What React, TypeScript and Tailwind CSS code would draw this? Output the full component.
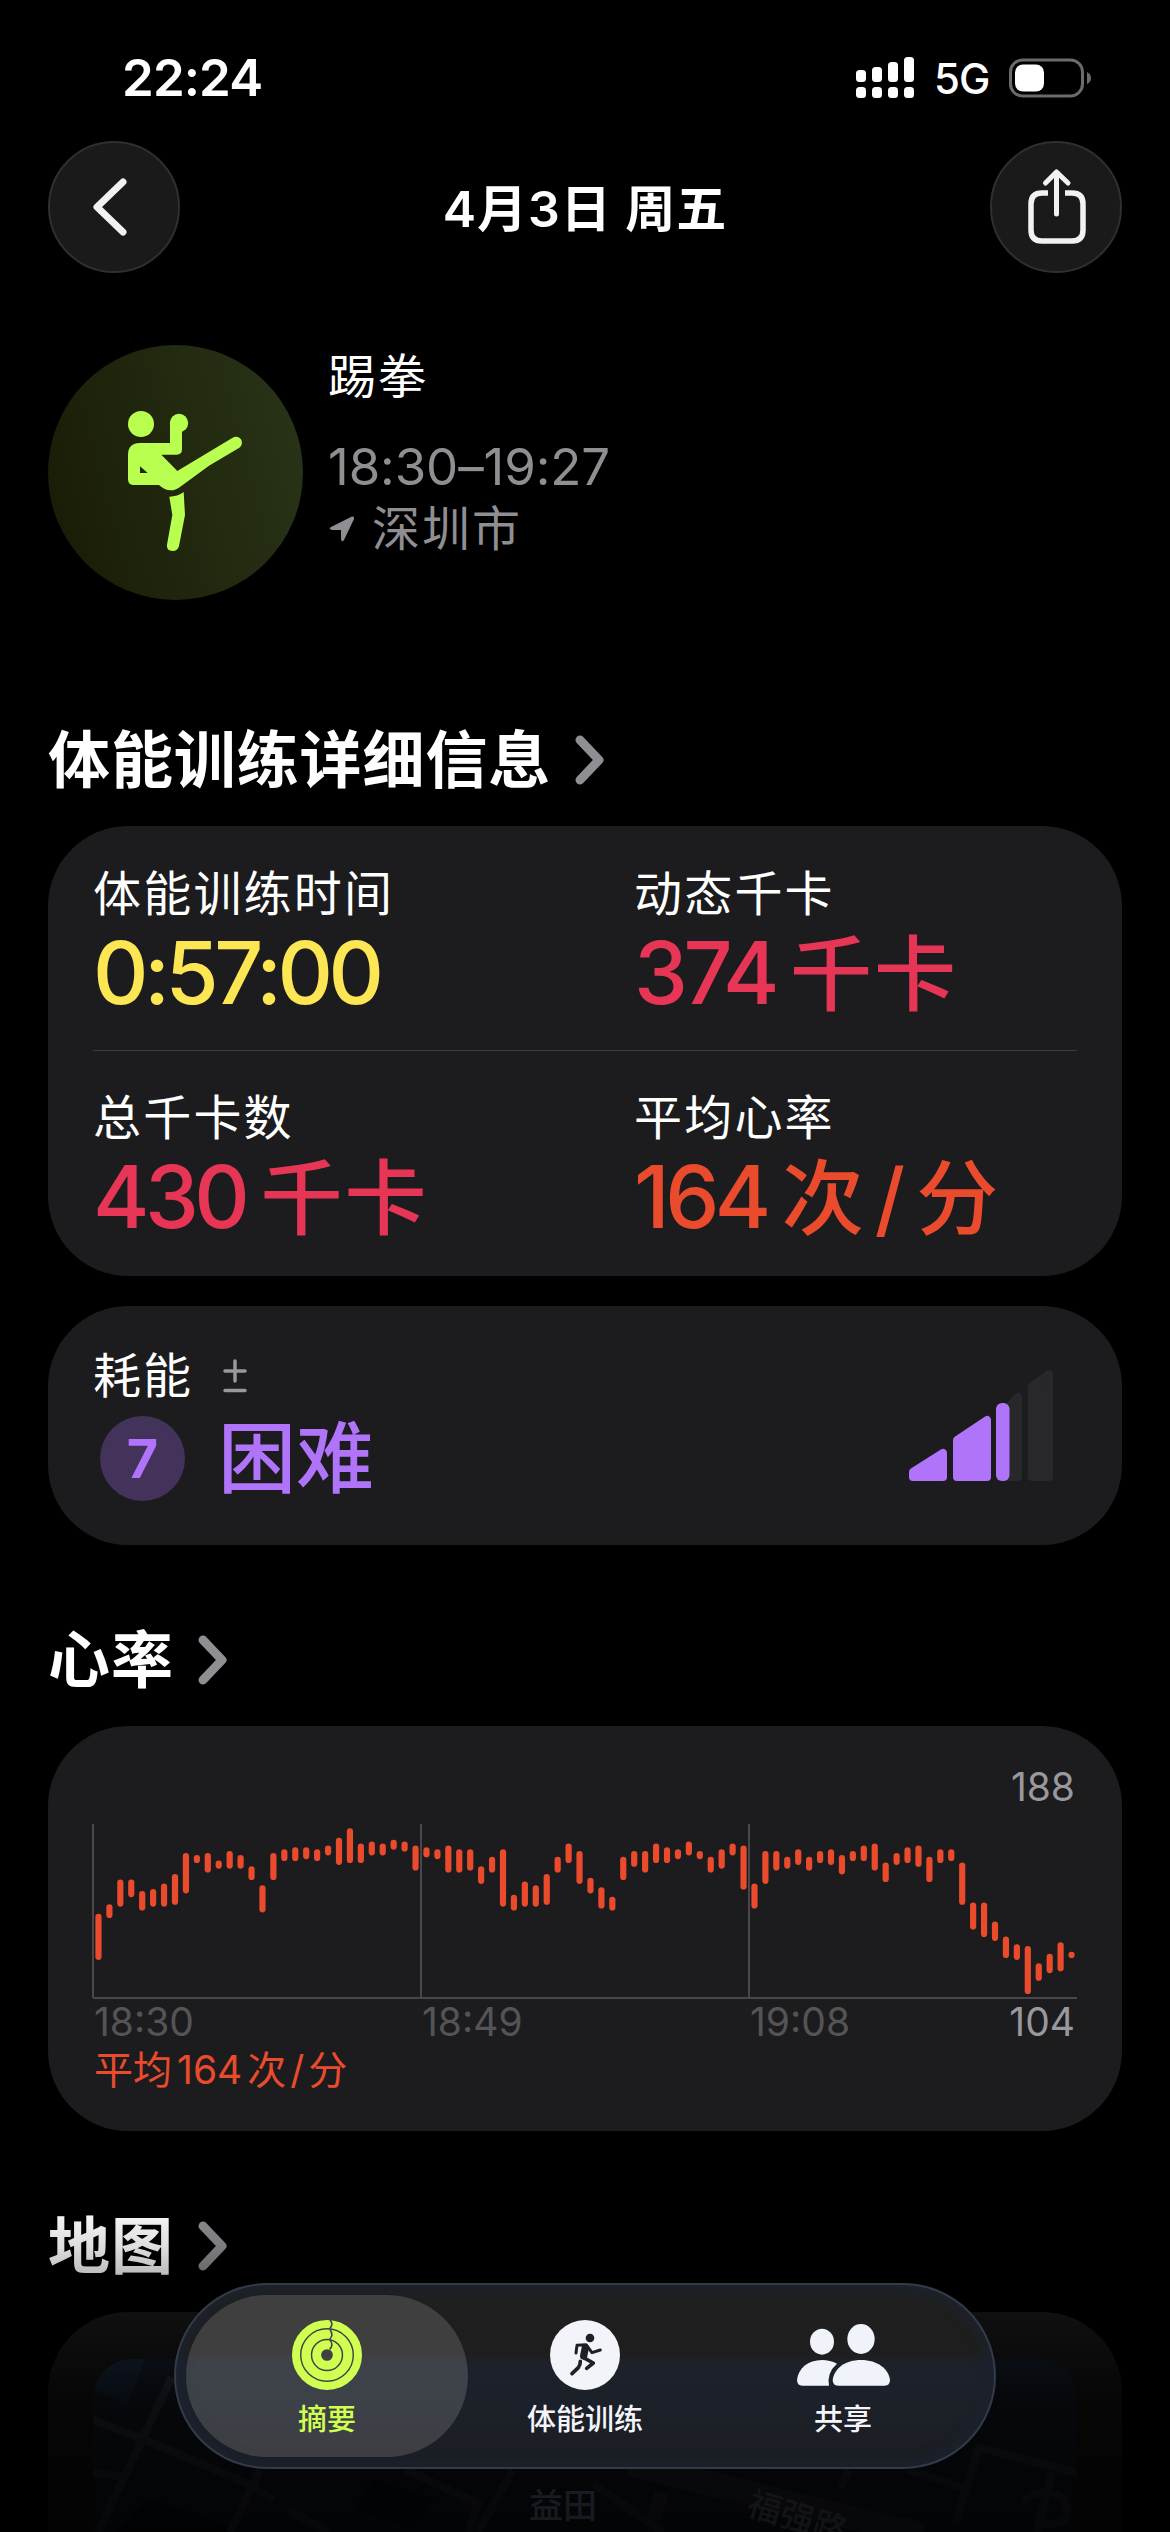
import type { ReactNode } from "react";
import clsx from "clsx";

// [low, high] bpm for each of the 90 slots
const heartRate = [
  [122, 143], [144, 148], [150, 161], [155, 161], [148, 155], [150, 156], [150, 159], [151, 164], [157, 175],
  [173, 174], [168, 175], [170, 171], [170, 176], [170, 174], [164, 168], [147, 158], [164, 175], [174, 177],
  [174, 178], [175, 178], [174, 177], [177, 179], [172, 183], [173, 188], [173, 180], [177, 181], [177, 180],
  [180, 182], [179, 181], [169, 179], [176, 178], [175, 177], [168, 179], [168, 177], [169, 177], [162, 168],
  [168, 173], [150, 177], [148, 153], [150, 160], [150, 158], [151, 164], [168, 173], [173, 180], [162, 176],
  [157, 162], [149, 157], [148, 152], [164, 173], [171, 176], [168, 176], [173, 180], [173, 178], [175, 177],
  [177, 181], [175, 176], [168, 173], [170, 177], [177, 180], [159, 179], [149, 159], [162, 176], [169, 176],
  [170, 173], [172, 177], [169, 173], [173, 176], [172, 177], [167, 174], [174, 176], [174, 179], [169, 180],
  [163, 170], [172, 175], [173, 178], [171, 179], [163, 173], [173, 177], [174, 177], [151, 170], [138, 149],
  [134, 149], [132, 139], [123, 131], [122, 127], [104, 126], [111, 117], [115, 122], [116, 128], [123, 123],
];

const CHART_WIDTH = 984;
const MAX_BPM = 188;
const slot = CHART_WIDTH / heartRate.length;
const bpmToY = (bpm: number) => 7.4 + (MAX_BPM - bpm) * 1.9;

function StatusBar() {
  return (
    <div className="flex h-[141px] items-center justify-between pt-[14px] pl-[122px] pr-[79px] text-white">
      <span className="text-[51px] leading-[60px] font-semibold tracking-[-0.900px]">22:24</span>
      <div className="flex items-center">
        <svg width="58" height="42" viewBox="0 0 58 42" fill="currentColor">
          <rect x="0" y="13" width="10" height="12" rx="3.5" />
          <rect x="16" y="10" width="10" height="15" rx="3.5" />
          <rect x="32" y="5" width="10" height="20" rx="3.5" />
          <rect x="48" y="0" width="10" height="25" rx="3.5" />
          {[0, 16, 32, 48].map((x) => (
            <rect key={x} x={x} y="30" width="10" height="11" rx="3.5" />
          ))}
        </svg>
        <span className="mt-[2px] ml-[20px] w-[75px] text-[42px] leading-[48px] font-medium tracking-[-1px]">5G</span>
        <svg width="82" height="40" viewBox="0 0 82 40">
          <rect x="1.5" y="2" width="72" height="36" rx="12" fill="none" stroke="#6b6b6b" strokeWidth="3" />
          <rect x="6" y="6.500" width="29" height="27" rx="8" fill="#fff" />
          <path d="M78 14 q4 2 4 6 q0 4 -4 6z" fill="#6b6b6b" />
        </svg>
      </div>
    </div>
  );
}

function RoundButton({ label, children }: { label: string; children: ReactNode }) {
  return (
    <button
      aria-label={label}
      className="flex size-[132px] items-center justify-center rounded-full border-2 border-[#2f2f2f] bg-[#1a1a1a] text-[#f2f2f2]"
    >
      {children}
    </button>
  );
}

function KickboxingIcon() {
  return (
    <svg width="150" height="160" viewBox="0 0 450 480" fill="#b9ff50">
      <circle cx="93" cy="72" r="39" />
      <circle cx="207" cy="69" r="27.500" />
      <path
        fillRule="evenodd"
        d="M90 129 H180 V69 H216 V148 Q216 164 200 164 H154 L202 213 L368 113 A18 18 0 0 1 388 143 L297 197 L215 257 Q180 286 147 255 H72 Q54 255 54 237 V165 Q54 129 90 129Z M90 199 V219 H113Z"
      />
      <path d="M178 290 Q203 290 221 276 L225 345 L207 438 Q203 453 188 453 Q169 453 171 434 L187 345Z" />
    </svg>
  );
}

function SectionTitle({ children, className }: { children: ReactNode; className?: string }) {
  return (
    <h2 className={clsx("mb-[28px] flex h-[76px] items-center text-white", className)}>
      <span className="pt-[2px] text-[62px] leading-[76px] font-bold tracking-[0.900px]">{children}</span>
      <svg width="30" height="50" viewBox="0 0 30 50" className="ml-[24px]">
        <path d="M5 5 L24 25 L5 45" fill="none" stroke="#8e8e93" strokeWidth="9" strokeLinecap="round" strokeLinejoin="round" />
      </svg>
    </h2>
  );
}

function PerMinute({ className }: { className?: string }) {
  return (
    <>
      次<span className={className}>/</span>分
    </>
  );
}

function Metric({ label, value, unit, color }: { label: string; value: string; unit?: ReactNode; color: string }) {
  return (
    <div>
      <div className="pt-px text-[48px] leading-[60px] tracking-[2.200px] text-white">{label}</div>
      <div className={clsx("-mt-px flex text-[86px] leading-[100px] font-medium", color)}>
        <span className="tracking-[-4.500px]">{value}</span>
        {unit && <span className="ml-[15px] pt-[2px] text-[82px] leading-[100px] tracking-[2px]">{unit}</span>}
      </div>
    </div>
  );
}

function EffortBars() {
  return (
    <svg width="144" height="112" viewBox="0 0 144 112" strokeLinejoin="round" strokeWidth="8">
      <g fill="#28282a" stroke="#28282a">
        <path d="M91 107 V46 L109 27 V107Z" />
        <path d="M123 107 V16 L140 4 V107Z" />
      </g>
      <g fill="#b074fa" stroke="#b074fa">
        <path d="M4 107 V102 L34 83 V107Z" />
        <path d="M48 107 V70 L78 50 V107Z" />
      </g>
      <rect x="87" y="33" width="13.500" height="78" rx="6" fill="#b074fa" stroke="none" />
    </svg>
  );
}

function HeartRateChart() {
  return (
    <svg width={CHART_WIDTH} height="175" viewBox="0 0 984 175" className="mt-[13px] block overflow-visible">
      <g stroke="#48484a" strokeWidth="2">
        <path d="M0 0 V174 M328 0 V174 M656 0 V174" />
        <path d="M0 174 H984" />
      </g>
      <g stroke="#ea4b2d" strokeWidth="6.200" strokeLinecap="round">
        {heartRate.map(([low, high], i) => {
          const x = slot * (i + 0.5);
          return <line key={i} x1={x} x2={x} y1={bpmToY(high)} y2={bpmToY(low) + 0.01} />;
        })}
      </g>
    </svg>
  );
}

function MapPreview() {
  return (
    <svg width="984" height="173" viewBox="0 0 984 173" className="block">
      <rect width="984" height="173" fill="#1b2333" />
      <path d="M0 0 H52 L34 46 L0 30Z" fill="#22324c" />
      <path d="M54 140 l-30 33 h120 l-40 -18z M280 120 l-20 30 l60 20 l20 -30z" fill="#10141c" />
      <g fill="none" stroke="#3a3f49" strokeWidth="8">
        <path d="M0 61 L52 81 L158 126 L180 141" />
        <path d="M79 18 L5 173 M0 114 L33 118 M167 111 L137 173" />
        <path d="M313 111 L385 144 L375 173 M420 111 L385 173 M194 151 L236 173" />
        <path d="M883 88 L984 114 M886 88 L863 164 M959 114 L944 173" />
        <path d="M500 125 L570 173 M814 111 L871 129 M756 111 L748 129" />
        <path d="M569 134 L560 160" strokeWidth="14" />
        <path d="M536 105 L830 176" strokeWidth="24" />
        <path d="M930 142 Q955 125 972 142 Q980 165 955 165 Q940 160 952 150" />
      </g>
      <g fontWeight="500">
        <text x="436" y="159" fontSize="34" fill="#a9ccf8">
          益田
        </text>
        <text x="652" y="155" fontSize="34" fill="#8d95a3" transform="rotate(17 652 155)">
          福强路
        </text>
      </g>
    </svg>
  );
}

function RingsIcon() {
  return (
    <svg width="70" height="70" viewBox="0 0 70 70" fill="none">
      <g stroke="#d0ff52">
        <circle cx="35" cy="35" r="31" strokeWidth="8" />
        <circle cx="35" cy="35" r="20.900" strokeWidth="9.400" />
        <circle cx="35" cy="35" r="10.300" strokeWidth="8.900" />
      </g>
      <g stroke="#42454b" strokeWidth="1.600">
        <path d="M38 0 Q42 4 37.500 9" />
        <path d="M38 9.500 Q42 15 37.500 19.500" />
        <path d="M38 20 Q42 25 37.500 29.500" />
      </g>
    </svg>
  );
}

function RunnerIcon() {
  return (
    <svg width="70" height="70" viewBox="0 0 210 210">
      <circle cx="105" cy="105" r="105" fill="#f2f4fa" />
      <circle cx="120" cy="54" r="13" fill="#1e2024" />
      <g fill="none" stroke="#1e2024" strokeLinecap="round" strokeLinejoin="round">
        <path d="M78 99 L81 76 L108 74 L126 98 L151 90" strokeWidth="9" />
        <path d="M106 83 L101 108" strokeWidth="22" />
        <path d="M99 112 L130 129 L110 145" strokeWidth="11" />
        <path d="M91 124 Q91 136 85 143 L66 161" strokeWidth="11" />
      </g>
    </svg>
  );
}

function PeopleIcon() {
  return (
    <svg width="93" height="70" viewBox="54 60 279 210" fill="#f1f3fb">
      <ellipse cx="129" cy="125" rx="36" ry="39" />
      <ellipse cx="246" cy="117" rx="41" ry="45" />
      <path d="M54 240 C58 205 87 180 129 180 Q153 180 174 191 Q143 218 150 257 H70 Q54 257 54 240Z" />
      <path d="M161 240 C166 205 199 180 246 180 C296 180 329 207 333 240 Q333 257 317 257 H177 Q161 257 161 240Z" />
    </svg>
  );
}

function TabItem({ label, active, children }: { label: string; active?: boolean; children: ReactNode }) {
  return (
    <button
      className={clsx(
        "flex h-[162px] w-[282px] flex-col items-center rounded-[81px] pt-[25px]",
        active ? "bg-white/15 text-[#d0ff52]" : "text-[#f4f5fb]"
      )}
    >
      {children}
      <span className="mt-[10px] text-[29px] leading-[40px] font-medium">{label}</span>
    </button>
  );
}

export default function App() {
  return (
    <div className="relative h-[2532px] w-[1170px] overflow-hidden bg-black font-['Inter','Noto_Sans_CJK_SC',sans-serif]">
      <StatusBar />

      <header className="flex h-[132px] items-center justify-between px-[48px]">
        <RoundButton label="返回">
          <svg width="40" height="64" viewBox="0 0 40 64" className="mr-[11px]">
            <path d="M34 7 L8 32 L34 57" fill="none" stroke="currentColor" strokeWidth="7" strokeLinecap="round" strokeLinejoin="round" />
          </svg>
        </RoundButton>
        <h1 className="pt-[3px] text-[50px] leading-[60px] font-semibold tracking-[1px] text-white">4月3日 周五</h1>
        <RoundButton label="共享">
          <svg width="60" height="78" viewBox="0 0 60 78" fill="none" stroke="currentColor" strokeWidth="5.500" className="mb-[3px] ml-px">
            <path d="M21 26 H15 Q4 26 4 37 V63 Q4 74 15 74 H45 Q56 74 56 63 V37 Q56 26 45 26 H38" />
            <path d="M29.500 47 V5 M18.500 16 L29.500 5 L41 16" strokeWidth="5" strokeLinecap="round" strokeLinejoin="round" />
          </svg>
        </RoundButton>
      </header>

      <main className="px-[48px]">
        <section className="mt-[72px] flex h-[255px]">
          <div className="flex size-[255px] items-center justify-center rounded-full bg-[linear-gradient(75deg,#191b05,#293518)] pt-[15px] pl-[19px]">
            <KickboxingIcon />
          </div>
          <div className="ml-[25px] pt-[2px]">
            <div className="text-[48px] leading-[60px] tracking-[2px] text-white">踢拳</div>
            <div className="mt-[29px] text-[51px] leading-[61px] tracking-[-0.100px] text-[#8e8e93]">18:30–19:27</div>
            <div className="flex items-center pt-px text-[48px] leading-[61px] tracking-[2px] text-[#8e8e93]">
              <svg width="26" height="26" viewBox="0 0 26 26" fill="currentColor" className="mr-[17px] ml-px">
                <path d="M23 0.500 Q25.500 0 25 3 L15 24 Q13 27 12 23 V14 H3 Q-1 13 2 11Z" />
              </svg>
              深圳市
            </div>
          </div>
        </section>

        <SectionTitle className="mt-[122px]">体能训练详细信息</SectionTitle>
        <section className="h-[450px] rounded-[80px] bg-[#1c1c1e] px-[45px]">
          <div className="grid h-[225px] grid-cols-[541px_1fr] border-b border-[#3a3a3c] pt-[37px]">
            <Metric label="体能训练时间" value="0:57:00" color="text-[#fce653]" />
            <Metric label="动态千卡" value="374" unit="千卡" color="text-[#e73655]" />
          </div>
          <div className="grid h-[225px] grid-cols-[541px_1fr] pt-[36px]">
            <Metric label="总千卡数" value="430" unit="千卡" color="text-[#e73655]" />
            <Metric label="平均心率" value="164" unit={<PerMinute className="mx-[9px]" />} color="text-[#ea4b2d]" />
          </div>
        </section>

        <section className="mt-[30px] flex h-[239px] justify-between rounded-[80px] bg-[#1c1c1e] pr-[69px] pl-[45px]">
          <div className="pt-[40px]">
            <div className="flex items-center text-[48px] leading-[60px] tracking-[2px] text-white">
              耗能
              <svg width="24" height="34" viewBox="0 0 24 34" stroke="#98989d" strokeWidth="3.500" strokeLinecap="round" className="ml-[30px]">
                <path d="M2 12 H22 M12 2 V22 M2 31.500 H22" />
              </svg>
            </div>
            <div className="mt-[7px] ml-[7px] flex h-[90px] items-center text-[#b074fa]">
              <span className="flex size-[85px] items-center justify-center rounded-full bg-[#43325a] text-[54px] font-bold">7</span>
              <span className="ml-[33px] pt-[2px] text-[78px] leading-[90px] font-medium">困难</span>
            </div>
          </div>
          <div className="pt-[64px]">
            <EffortBars />
          </div>
        </section>

        <SectionTitle className="mt-[77px]">心率</SectionTitle>
        <section className="h-[405px] rounded-[80px] bg-[#1c1c1e] px-[45px] pt-[37px] text-[39px] leading-[48px]">
          <div className="pr-[2px] text-right text-[#98989d]">188</div>
          <HeartRateChart />
          <div className="-mt-px grid grid-cols-3 text-[#545456]">
            <span className="pl-px">18:30</span>
            <span className="pl-px">18:49</span>
            <span className="flex justify-between pr-[2px] pl-px">
              19:08 <span className="text-[#98989d]">104</span>
            </span>
          </div>
          <div className="flex pl-px text-[#ea4b2d]">
            <span>平均</span>
            <span className="mx-[5px]">164</span>
            <span>
              <PerMinute className="mx-[4px]" />
            </span>
          </div>
        </section>

        <SectionTitle className="mt-[77px]">地图</SectionTitle>
        <section className="h-[400px] rounded-[80px] bg-[#1c1c1e] px-[45px] pt-[47px]">
          <div className="overflow-hidden rounded-t-[40px]">
            <MapPreview />
          </div>
        </section>
      </main>

      {/* content fades out under the tab bar */}
      <div className="absolute inset-x-0 bottom-0 h-[332px] bg-[linear-gradient(to_bottom,transparent_0%,rgba(0,0,0,0.13)_14%,rgba(0,0,0,0.27)_23%,rgba(0,0,0,0.43)_34%,rgba(0,0,0,0.62)_48%,rgba(0,0,0,0.78)_60%,rgba(0,0,0,0.86)_84%,rgba(0,0,0,0.88)_100%)]" />

      <nav className="absolute top-[2283px] left-[174px] flex h-[186px] w-[822px] items-center -space-x-[24px] rounded-[93px] border-2 border-[#343b47] bg-[linear-gradient(to_bottom,#1f1f1f_0%,#1e1e1e_37%,#1d212b_44%,#1c2028_65%,#1b1d22_100%)] pl-[10px] shadow-[inset_0_0_12px_4px_#1b2330]">
        <TabItem label="摘要" active>
          <RingsIcon />
        </TabItem>
        <TabItem label="体能训练">
          <RunnerIcon />
        </TabItem>
        <TabItem label="共享">
          <PeopleIcon />
        </TabItem>
      </nav>
    </div>
  );
}
